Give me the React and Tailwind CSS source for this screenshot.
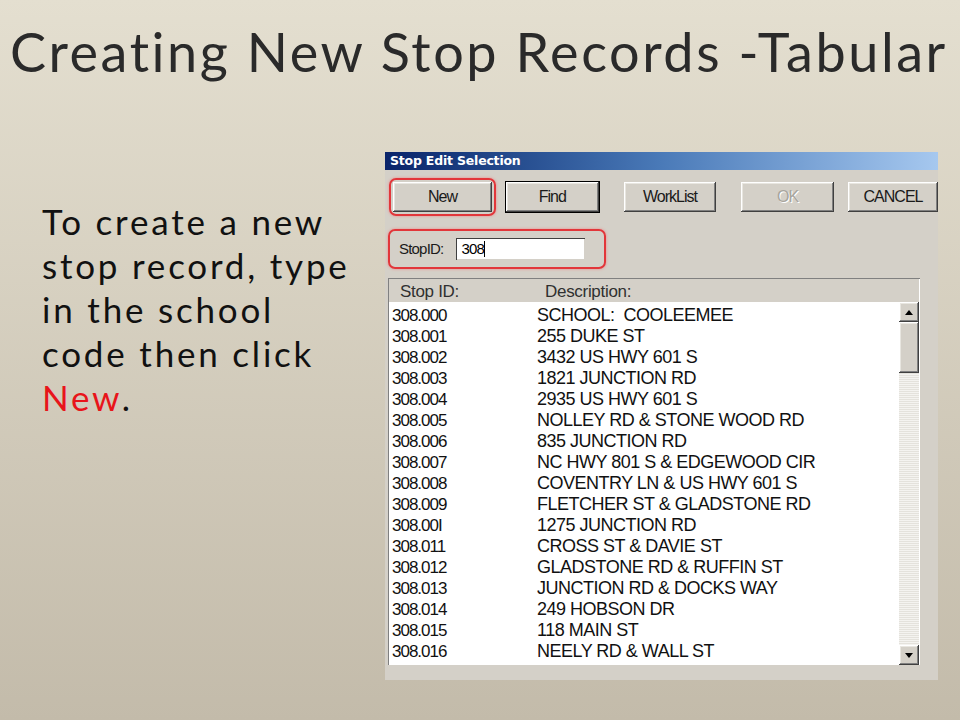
import React from "react";

const rows = [
  ["308.000", "SCHOOL:  COOLEEMEE"],
  ["308.001", "255 DUKE ST"],
  ["308.002", "3432 US HWY 601 S"],
  ["308.003", "1821 JUNCTION RD"],
  ["308.004", "2935 US HWY 601 S"],
  ["308.005", "NOLLEY RD & STONE WOOD RD"],
  ["308.006", "835 JUNCTION RD"],
  ["308.007", "NC HWY 801 S & EDGEWOOD CIR"],
  ["308.008", "COVENTRY LN & US HWY 601 S"],
  ["308.009", "FLETCHER ST & GLADSTONE RD"],
  ["308.00I", "1275 JUNCTION RD"],
  ["308.011", "CROSS ST & DAVIE ST"],
  ["308.012", "GLADSTONE RD & RUFFIN ST"],
  ["308.013", "JUNCTION RD & DOCKS WAY"],
  ["308.014", "249 HOBSON DR"],
  ["308.015", "118 MAIN ST"],
  ["308.016", "NEELY RD & WALL ST"],
  ["308.017", "L AVALLA DINE RIDGE DR"],
];

const raised =
  "shadow-[inset_-1px_-1px_#404040,inset_1px_1px_#ffffff,inset_-2px_-2px_#808080,inset_2px_2px_#e8e6e0]";

function WinButton({ children, disabled, isDefault, className = "" }) {
  return (
    <div
      className={`h-[30px] flex items-center justify-center bg-[#d4d0c8] ${raised} ${
        isDefault ? "outline outline-1 outline-black" : ""
      } ${className}`}
    >
      <span
        className={`text-[16px] tracking-[-1px] ${
          disabled ? "text-[#a8a59d] [text-shadow:1px_1px_#ffffff]" : "text-[#1a1a1a]"
        }`}
      >
        {children}
      </span>
    </div>
  );
}

function ScrollArrow({ up }) {
  return (
    <div className={`w-[20px] h-[20px] bg-[#d4d0c8] flex items-center justify-center ${raised}`}>
      <svg width="8" height="5" viewBox="0 0 8 5">
        {up ? <polygon points="4,0 8,5 0,5" fill="#000" /> : <polygon points="0,0 8,0 4,5" fill="#000" />}
      </svg>
    </div>
  );
}

export default function App() {
  return (
    <div
      className="w-[960px] h-[720px] overflow-hidden bg-gradient-to-b from-[#e4dfd0] to-[#c3bbaa]"
      style={{ fontFamily: '"Liberation Sans", Arial, sans-serif' }}
    >
      <h1
        className="pt-[20px] pl-[10px] text-[54px] leading-[64px] text-[#2a2a2a] tracking-[2.55px] whitespace-nowrap"
        style={{ fontFamily: '"Lato", "Liberation Sans", sans-serif', fontWeight: 400 }}
      >
        Creating New Stop Records -Tabular
      </h1>

      <div className="flex mt-[68px]">
        <div
          className="w-[385px] pl-[42px] pt-[47px] text-[35px] leading-[44px] text-[#111] tracking-[2.8px] whitespace-nowrap"
          style={{ fontFamily: '"Lato", "Liberation Sans", sans-serif' }}
        >
          To create a new
          <br />
          stop record, type
          <br />
          in the school
          <br />
          code then click
          <br />
          <span className="text-[#e8141a]">New</span>.
        </div>

        <div className="w-[553px] h-[528px] bg-[#d4d0c8] flex flex-col">
          <div className="h-[18px] bg-gradient-to-r from-[#0a246a] via-[#4a7ab8] to-[#a6c8ef] flex items-center pl-[5px]">
            <span className="text-white font-bold text-[12.5px] tracking-[-0.2px]" style={{ fontFamily: '"DejaVu Sans", sans-serif' }}>
              Stop Edit Selection
            </span>
          </div>

          <div className="flex items-center mt-[8px] pl-[7px]">
            <div className="rounded-[7px] border-2 border-[#e2363a] p-[2px] shadow-[0_0_3px_#e88] -ml-[3px]">
              <WinButton className="w-[99px]">New</WinButton>
            </div>
            <WinButton isDefault className="w-[93px] ml-[10px]">Find</WinButton>
            <WinButton className="w-[93px] ml-[25px]">WorkList</WinButton>
            <WinButton disabled className="w-[93px] ml-[25px]">OK</WinButton>
            <WinButton className="w-[90px] ml-[14px] shrink-0">CANCEL</WinButton>
          </div>

          <div className="mt-[13px] ml-[3px] w-[218px] h-[40px] rounded-[7px] border-2 border-[#e2363a] shadow-[0_0_3px_#e88] flex items-center pl-[9px]">
            <span className="text-[15px] text-[#1a1a1a] tracking-[-0.8px]">StopID:</span>
            <div className="ml-[13px] w-[129px] h-[22px] bg-white shadow-[inset_1px_1px_#404040,inset_-1px_-1px_#d4d0c8] flex items-center pl-[5px]">
              <span className="text-[15px] text-black tracking-[-0.8px]">308</span>
              <span className="w-px h-[16px] bg-black" />
            </div>
          </div>

          <div className="mt-[9px] ml-[3px] w-[532px] h-[387px] shadow-[inset_1px_1px_#808080,inset_-1px_-1px_#ffffff] flex flex-col">
            <div className="h-[24px] flex items-center text-[17px] text-[#303030] pt-[3px] tracking-[-0.3px]">
              <span className="pl-[12px] w-[157px]">Stop ID:</span>
              <span>Description:</span>
            </div>
            <div className="flex flex-1 ml-[1px] overflow-hidden">
              <div className="w-[510px] bg-white overflow-hidden h-[363px] pt-[3px]">
                {rows.map(([id, desc]) => (
                  <div key={id} className="flex h-[21px] items-center text-[#111] whitespace-nowrap">
                    <span className="pl-[3px] w-[148px] text-[17px] tracking-[-1px]">{id}</span>
                    <span className="text-[18px] tracking-[-0.5px] whitespace-pre">{desc}</span>
                  </div>
                ))}
              </div>
              <div className="w-[20px] h-[363px] flex flex-col bg-[#ecebe7] bg-[repeating-linear-gradient(0deg,#f4f3f0_0px,#f4f3f0_1px,#e4e2dc_1px,#e4e2dc_2px)]">
                <ScrollArrow up />
                <div className={`h-[51px] bg-[#d4d0c8] ${raised}`} />
                <div className="flex-1" />
                <ScrollArrow />
              </div>
            </div>
          </div>
        </div>
      </div>
    </div>
  );
}
